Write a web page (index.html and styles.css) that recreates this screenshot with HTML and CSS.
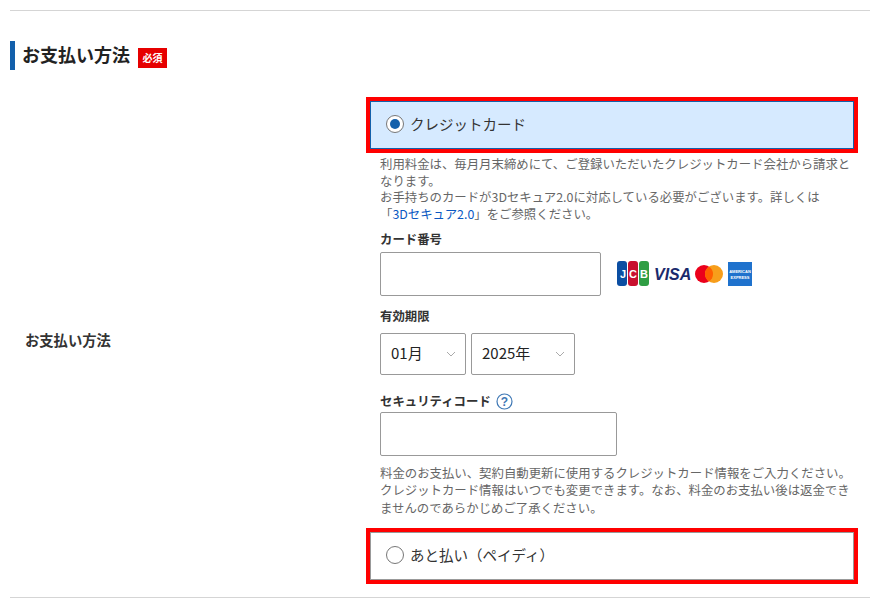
FILE: index.html
```html
<!DOCTYPE html>
<html lang="ja">
<head>
    <meta charset="UTF-8">
    <title>お支払い方法</title>
    <link rel="stylesheet" href="styles.css">
</head>
<body>
    <div class="section">
        <h2 class="section-title">お支払い方法<span class="required">必須</span></h2>
        <div class="form-row">
            <div class="row-label">お支払い方法</div>
            <div class="row-body">
                <div class="pay-option selected">
                    <span class="radio checked"></span>クレジットカード
                </div>
                <div class="card-form">
                    <p class="note">利用料金は、毎月月末締めにて、ご登録いただいたクレジットカード会社から請求となります。<br>お手持ちのカードが3Dセキュア2.0に対応している必要がございます。詳しくは<br>「<a href="#">3Dセキュア2.0</a>」をご参照ください。</p>
                    <div class="field field-number">
                        <label>カード番号</label>
                        <div class="number-line">
                            <div class="input number-input"></div>
                            <div class="brands">
                                <svg width="32" height="25" viewBox="0 0 32 25">
                                    <rect x="0" y="0" width="10" height="25" rx="3" fill="#0b4ea2"/>
                                    <rect x="11" y="0" width="10" height="25" rx="3" fill="#c8102e"/>
                                    <rect x="22" y="0" width="10" height="25" rx="3" fill="#2f9e44"/>
                                    <text x="6" y="17" text-anchor="middle" class="jcb-text">J</text>
                                    <text x="16" y="17" text-anchor="middle" class="jcb-text">C</text>
                                    <text x="27" y="17" text-anchor="middle" class="jcb-text">B</text>
                                </svg>
                                <svg width="37" height="16" viewBox="0 0 37 16">
                                    <text x="0" y="13.5" class="visa-text">VISA</text>
                                </svg>
                                <svg class="mc" width="28" height="18" viewBox="0 0 28 18">
                                    <circle cx="9" cy="9" r="9" fill="#eb001b"/>
                                    <circle cx="19" cy="9" r="9" fill="#f79e1b"/>
                                    <path d="M14 1.5a9 9 0 0 1 0 15a9 9 0 0 1 0-15z" fill="#ff5f00"/>
                                </svg>
                                <svg width="24" height="24" viewBox="0 0 24 24">
                                    <rect width="24" height="24" fill="#1f72cd"/>
                                    <text x="12" y="11" text-anchor="middle" class="amex-text">AMERICAN</text>
                                    <text x="12" y="17" text-anchor="middle" class="amex-text">EXPRESS</text>
                                </svg>
                            </div>
                        </div>
                    </div>
                    <div class="field field-expiry">
                        <label>有効期限</label>
                        <div class="select-line">
                            <div class="select month">01月<svg class="chevron" width="10" height="6" viewBox="0 0 10 6"><path d="M1 1l4 4 4-4" fill="none" stroke="#aaa"/></svg></div>
                            <div class="select year">2025年<svg class="chevron" width="10" height="6" viewBox="0 0 10 6"><path d="M1 1l4 4 4-4" fill="none" stroke="#aaa"/></svg></div>
                        </div>
                    </div>
                    <div class="field field-code">
                        <label>セキュリティコード<svg class="help" width="17" height="17" viewBox="0 0 17 17"><circle cx="8.5" cy="8.5" r="7.5" fill="#fff" stroke="#3f78b5" stroke-width="1.2"/><text x="8.5" y="12.5" text-anchor="middle" class="help-text">?</text></svg></label>
                        <div class="input code-input"></div>
                    </div>
                    <p class="note note-bottom">料金のお支払い、契約自動更新に使用するクレジットカード情報をご入力ください。<br>クレジットカード情報はいつでも変更できます。なお、料金のお支払い後は返金できませんのであらかじめご了承ください。</p>
                </div>
                <div class="pay-option">
                    <span class="radio"></span>あと払い（ペイディ）
                </div>
            </div>
        </div>
    </div>
</body>
</html>
```

FILE: styles.css
```css
* {
    box-sizing: border-box;
}
body {
    margin: 0;
    font-family: "Noto Sans CJK JP", "Liberation Sans", sans-serif;
    background: #fff;
    color: #333;
}
.section {
    margin: 10px 10px 0;
    height: 588px;
    border-top: 1px solid #d5d5d5;
    border-bottom: 1px solid #d5d5d5;
    padding-top: 30px;
}
.section-title {
    margin: 0;
    height: 29px;
    padding: 0 0 2px 7px;
    border-left: 5px solid #1360ab;
    font-size: 18px;
    line-height: 27px;
    font-weight: bold;
    color: #222;
    display: flex;
    align-items: center;
}
.required {
    margin-left: 8px;
    margin-top: 7px;
    width: 29px;
    height: 20px;
    background: #e60000;
    color: #fff;
    font-size: 10px;
    line-height: 20px;
    text-align: center;
}
.form-row {
    display: flex;
    margin-top: 31px;
}
.row-label {
    width: 360px;
    padding: 0 0 3px 15px;
    font-size: 14.3px;
    font-weight: bold;
    color: #333;
    align-self: center;
}
.row-body {
    width: 484px;
}
.pay-option {
    height: 48px;
    display: flex;
    align-items: center;
    padding: 0 0 3px 15px;
    border: 1px solid #999;
    outline: 4px solid #f00;
    font-size: 14.5px;
    color: #333;
}
.pay-option.selected {
    background: #d6eaff;
    border-color: #1360ab;
}
.radio {
    width: 18px;
    height: 18px;
    margin-right: 6px;
    border: 1px solid #777;
    border-radius: 50%;
    background: #fff;
    position: relative;
}
.radio.checked::after {
    content: "";
    position: absolute;
    top: 3px;
    left: 3px;
    width: 10px;
    height: 10px;
    border-radius: 50%;
    background: #1360ab;
}
.card-form {
    padding: 7px 0 0 10px;
    height: 383px;
}
.note {
    margin: 0;
    font-size: 12.4px;
    line-height: 16.7px;
    color: #666;
}
.note a {
    color: #0a58c2;
    text-decoration: none;
}
.field label {
    display: flex;
    align-items: center;
    font-size: 12.4px;
    font-weight: bold;
    line-height: 17px;
    color: #333;
}
.field-number {
    margin-top: 8px;
}
.field-expiry {
    margin-top: 12px;
}
.field-code {
    margin-top: 18px;
}
.input {
    height: 44px;
    background: #fff;
    border: 1px solid #999;
    border-radius: 2px;
}
.number-line {
    display: flex;
    align-items: center;
    margin-top: 4px;
}
.number-input {
    width: 221px;
}
.code-input {
    width: 237px;
    margin-top: 2px;
}
.brands {
    display: flex;
    align-items: center;
    gap: 5px;
    margin-left: 16px;
}
.brands .mc {
    margin-left: -1px;
}
.jcb-text {
    font: bold 11px "Liberation Sans", sans-serif;
    fill: #fff;
}
.visa-text {
    font: italic bold 16px "Liberation Sans", sans-serif;
    fill: #1a2a6c;
}
.amex-text {
    font: bold 4px "Liberation Sans", sans-serif;
    fill: #fff;
}
.select-line {
    display: flex;
    gap: 5px;
    margin-top: 8px;
}
.select {
    height: 42px;
    display: flex;
    align-items: center;
    justify-content: space-between;
    padding: 0 9px 2px 10px;
    border: 1px solid #999;
    border-radius: 2px;
    font-size: 15px;
    color: #222;
}
.chevron {
    margin-top: 3px;
}
.month {
    width: 86px;
}
.year {
    width: 104px;
}
.help {
    margin-left: 5px;
}
.help-text {
    font: bold 12px "Liberation Sans", sans-serif;
    fill: #3f78b5;
}
.note-bottom {
    margin-top: 9px;
    line-height: 17.5px;
}
```
